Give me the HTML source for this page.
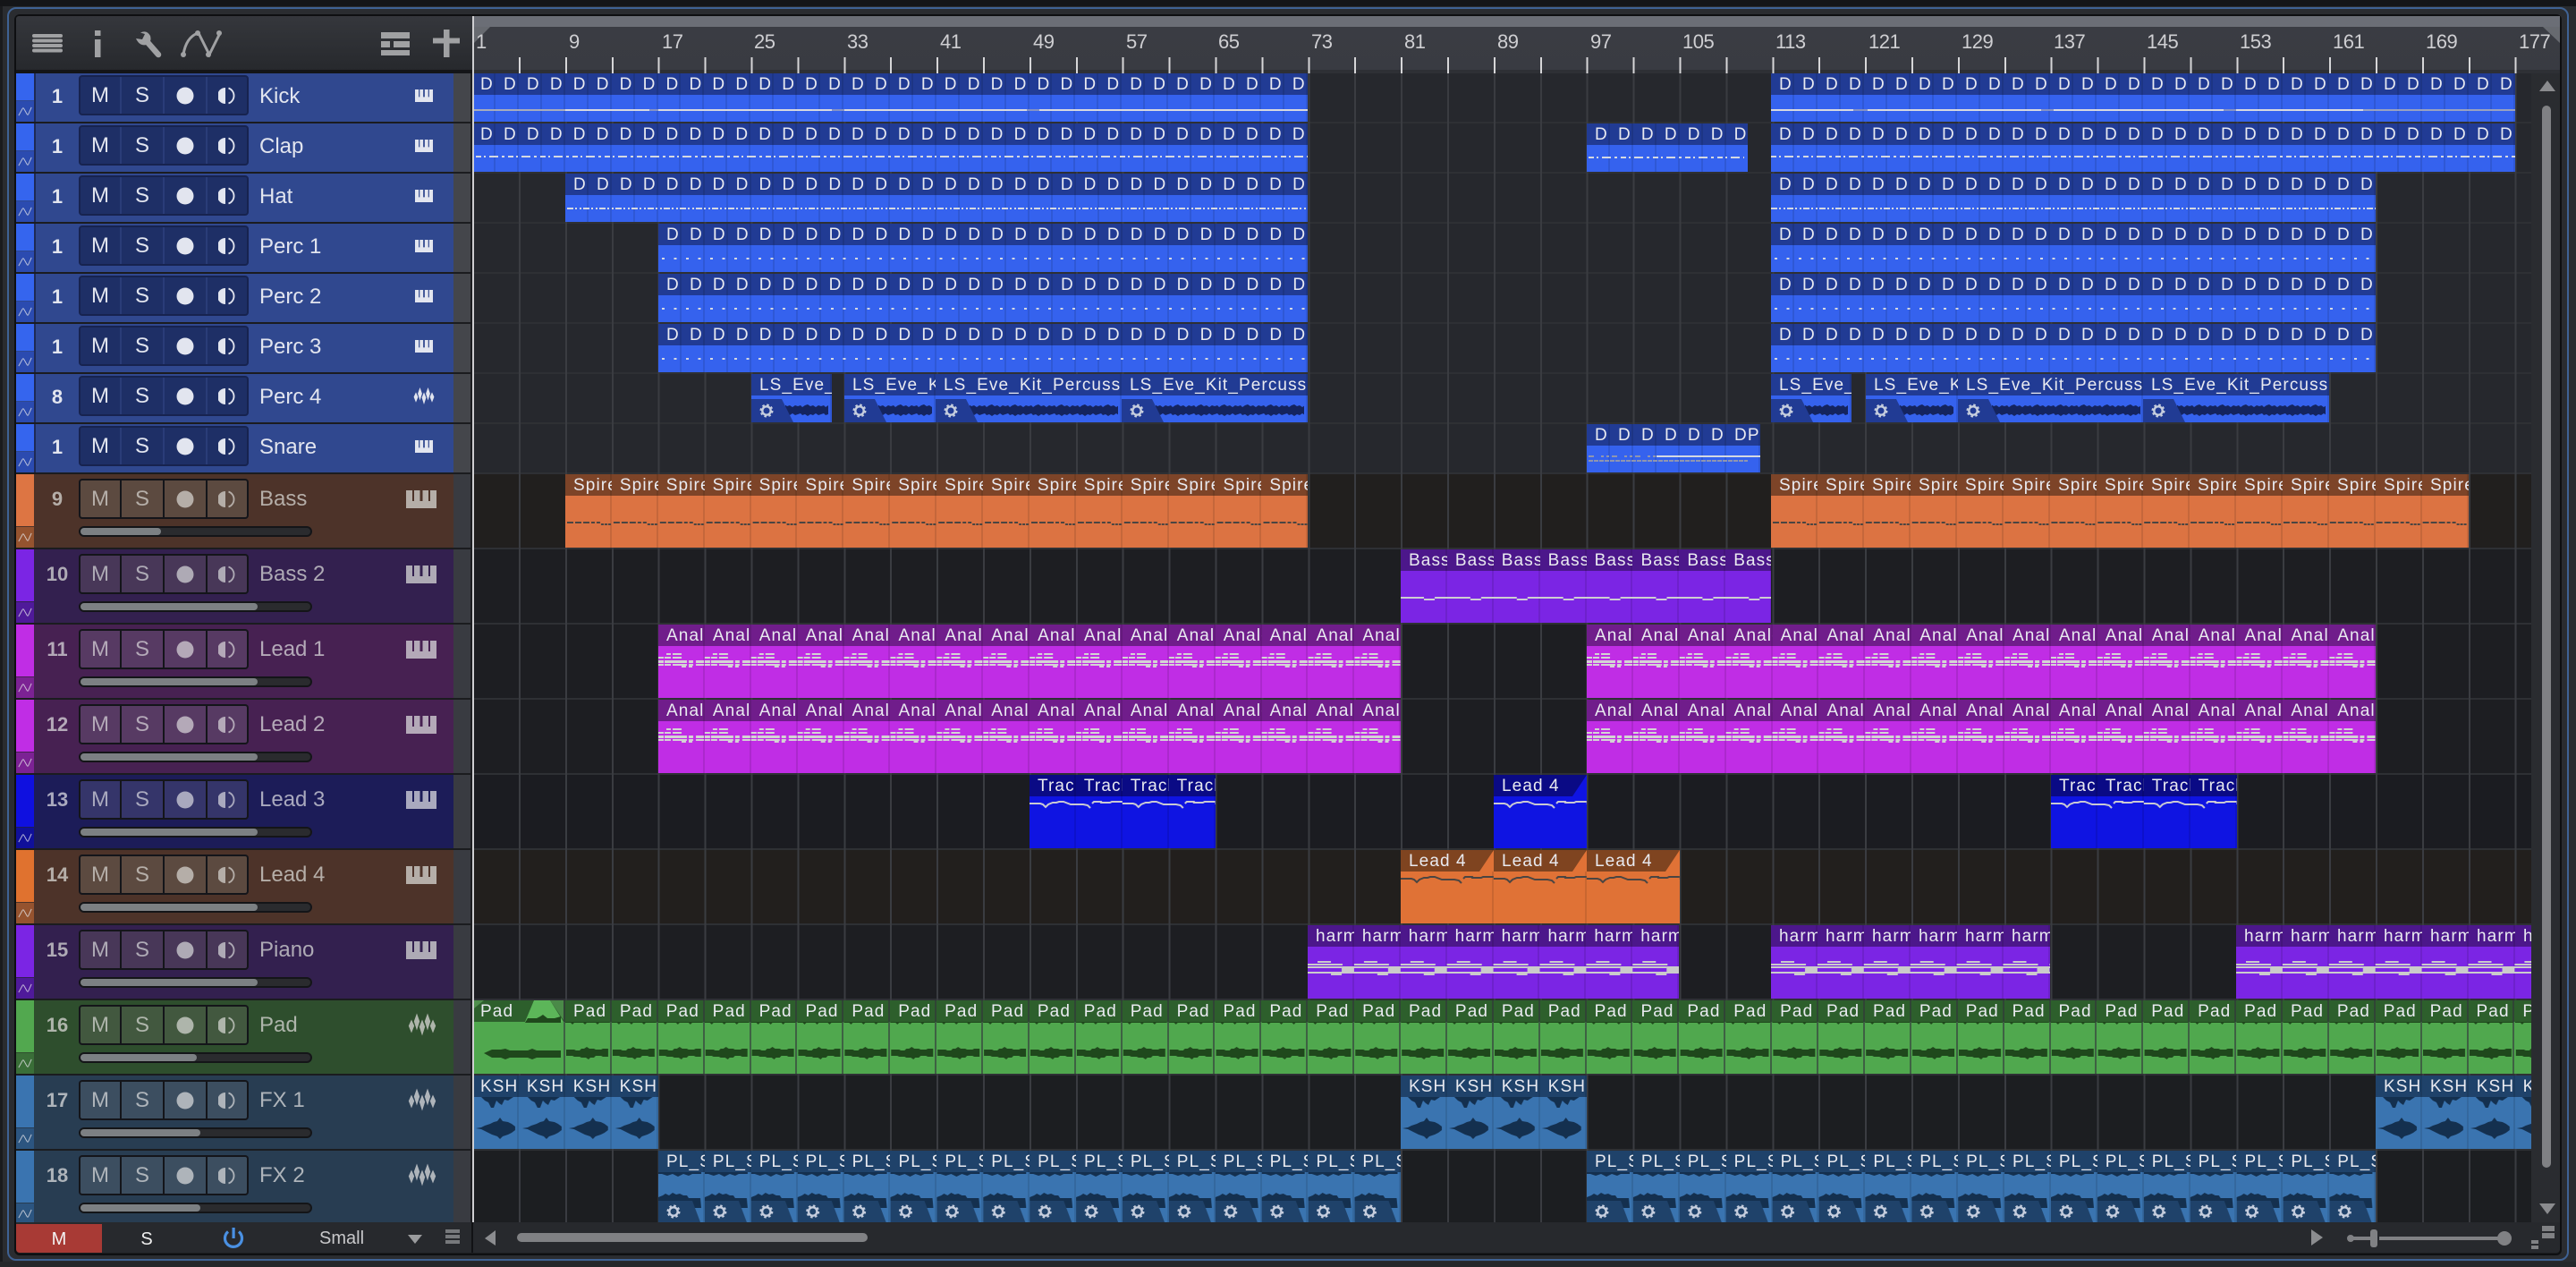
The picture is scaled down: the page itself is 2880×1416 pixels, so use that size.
<!DOCTYPE html>
<html><head><meta charset="utf-8"><title>Arrangement</title>
<style>
html,body{margin:0;padding:0;background:#2a2c30}
body{width:2880px;height:1416px;position:relative;overflow:hidden;font-family:"Liberation Sans",sans-serif}
.a{position:absolute}
.g{position:absolute;display:flex;overflow:hidden;height:82px}
.g i{flex:none;display:block;width:51.9px;height:100%;padding-left:9px;box-sizing:border-box;font:normal 19px/25px "Liberation Sans",sans-serif;letter-spacing:1.1px;overflow:hidden;white-space:nowrap;color:#e9eaf0;box-shadow:inset -2px 0 rgba(0,0,0,.1)}
.s{height:54px}.s i{width:25.95px}
.s.r i{width:26px}.r i{width:52px}
.bl{background:linear-gradient(#213b94 24px,#3562ee 24px)}
.or{background:linear-gradient(#7d4428 24px,#dc7342 24px)}
.ol{background:linear-gradient(#7f4420 24px,#e07236 24px)}
.pu{background:linear-gradient(#4c178b 24px,#7b25e4 24px)}
.mg{background:linear-gradient(#701d8b 24px,#c02de5 24px)}
.db{background:linear-gradient(#0a0a85 24px,#0f14e2 24px)}
.gn{background:linear-gradient(#2d5f2c 24px,#50a84e 24px)}
.fx{background:linear-gradient(#1f426a 24px,#3a74b0 24px)}
.gn i{box-shadow:inset -2px 0 rgba(50,50,60,.6)}
.t{position:absolute;left:18px;width:510px;height:54px;background:linear-gradient(90deg,var(--bg) 489px,#44464b 489px,#44464b 508px,#1c1d20 508px)}
.t.L{height:82px;background:linear-gradient(90deg,var(--bg) 489px,#393b41 489px,#393b41 508px,#1c1d20 508px)}
.t u{position:absolute;left:0;width:20px;display:block}
.t .st{top:0;height:30px;background:var(--st)}
.t .au{top:31px;height:23px;background:var(--au)}
.L .st{height:58px}.L .au{top:59px}
.t .gp{position:absolute;left:20px;top:0;bottom:0;width:2px;background:#1f2a55}
.L .gp{display:none}
.t .au svg{position:absolute;left:2px;top:5px;width:16px;height:13px}
.t b{position:absolute;left:22px;width:48px;text-align:center;top:14px;font:bold 22px/24px "Liberation Sans",sans-serif;color:var(--tx)}
.L b{top:16px}
.box{position:absolute;left:70px;top:2px;width:190px;height:45px;box-sizing:border-box;background:#14151a;border-radius:4px}
.t:not(.L) .box{background:#17234f}
.t:not(.L) .box p+p{box-shadow:-2px 0 #2a3c78}
.L .box{top:5px}
.box p{position:absolute;margin:0;top:2px;height:41px;background:var(--bt);color:var(--tx);font:24px/41px "Liberation Sans",sans-serif;text-align:center}
.box p:nth-child(1){left:2px;width:44px;border-radius:2px 0 0 2px}
.box p:nth-child(2){left:48px;width:46px}
.box p:nth-child(3){left:96px;width:46px}
.box p:nth-child(4){left:144px;width:44px;border-radius:0 2px 2px 0}
.box svg{position:absolute;left:50%;top:11px;margin-left:-10px;width:20px;height:20px}
.nm{position:absolute;left:272px;top:12px;font:24px/28px "Liberation Sans",sans-serif;color:var(--tx);white-space:nowrap}
.L .nm{top:14px}
.ic{position:absolute;color:var(--tx)}
.k1{left:446px;top:18px;width:20px;height:14px}
.k2{left:436px;top:18px;width:34px;height:20px}
.w2{left:438px;top:14px;width:32px;height:26px}
.w1{left:444px;top:15px;width:24px;height:19px}
.sl{position:absolute;left:70px;top:58px;width:261px;height:12px;box-sizing:border-box;border:2px solid #141518;border-radius:6px;background:#2a2b2e}
.sl s{display:block;height:8px;border-radius:4px;background:#7c8083}
.hb{background:#2e3034;height:2px;left:528px;width:2302px}
.ru{font:22px/24px "Liberation Sans",sans-serif;color:#cfcfd2;top:35px;letter-spacing:-.5px}
</style></head><body>

<svg width="0" height="0" style="position:absolute">
<defs>
<path id="pi" d="M0 0H7V12H9V0H15.5V12H18.5V0H25V12H27V0H34V20H0Z"/>
<path id="wv" d="M10 0L13.2 9L10 19L6.800 9ZM22 0L25.200 9L22 19L18.800 9ZM4 7L7.200 14L4 22L.8 14ZM16 7L19.200 15L16 25L12.800 15ZM28 7L31.200 14L28 22L24.800 14Z"/>
<g id="rec"><circle cx="10" cy="10" r="9.5" fill="currentColor"/></g>
<g id="mono"><path d="M8 1A9 9 0 0 0 8 19Z" fill="currentColor"/><path d="M11.5 1.5A9 9 0 0 1 11.5 18.500" fill="none" stroke="currentColor" stroke-width="1.800"/></g>
<path id="nn" d="M1 12L6 3Q7 1 8 3L12 10Q13 12 14 10L18 1" fill="none" stroke="#e6e6ea" stroke-opacity=".75" stroke-width="1.200"/>
<g id="gear"><circle r="4.700" fill="none" stroke="#c6cede" stroke-width="2.400"/><circle r="6.400" fill="none" stroke="#c6cede" stroke-width="2.200" stroke-dasharray="2.500 2.526"/></g>

<pattern id="pn" width="51.9" height="82" patternUnits="userSpaceOnUse"><g fill="#d4d4d4"><rect x="9" y="32" width="5" height="2"/><rect x="16" y="32" width="10" height="2"/><rect x="0" y="36" width="6" height="2"/><rect x="7" y="36" width="7" height="2"/><rect x="16" y="36" width="10" height="2"/><rect x="0" y="40" width="6" height="3"/><rect x="7" y="40" width="25" height="3"/><rect x="34" y="40" width="5" height="3"/><rect x="42" y="40" width="9" height="3"/><rect x="0" y="44" width="6" height="2"/><rect x="7" y="44" width="7" height="2"/><rect x="16" y="44" width="16" height="2"/><rect x="34" y="44" width="5" height="2"/><rect x="42" y="44" width="9" height="2"/><rect x="26" y="46" width="5" height="2"/><rect x="34" y="46" width="4" height="2"/></g></pattern>

<pattern id="ps" width="51.9" height="82" patternUnits="userSpaceOnUse"><g fill="#4a4542"><rect x="2" y="53" width="7" height="2"/><rect x="11" y="53" width="7" height="2"/><rect x="20" y="53" width="7" height="2"/><rect x="29" y="53" width="4" height="2"/><rect x="35" y="53" width="4" height="2"/><rect x="40" y="55" width="3" height="2"/><rect x="44" y="55" width="3" height="2"/><rect x="48" y="55" width="3" height="2"/></g></pattern>

<pattern id="pb" width="51.9" height="82" patternUnits="userSpaceOnUse"><g fill="#cdcdd2"><rect x="0" y="53" width="26" height="2"/><rect x="26" y="55" width="12" height="2"/><rect x="38" y="53" width="14" height="2"/></g></pattern>

<pattern id="ph" width="51.9" height="82" patternUnits="userSpaceOnUse"><g fill="#cbcbcb"><rect x="11" y="40" width="15" height="2"/><rect x="0" y="43" width="39" height="2"/><rect x="0" y="46" width="38" height="2"/><rect x="38" y="46" width="14" height="6"/><rect x="0" y="52" width="52" height="2"/><rect x="26" y="54" width="12" height="2"/></g></pattern>

<pattern id="pl" width="103.800" height="82" patternUnits="userSpaceOnUse"><path d="M0 32H12L15 33L18 36L21 33L26 31H30L33 30H38L46 33H60L65 34L68 37M70 32L72 30H80V31H90L92 30H104" fill="none" stroke="#c9c9d2" stroke-width="2"/></pattern>
<pattern id="po" width="103.800" height="82" patternUnits="userSpaceOnUse"><path d="M0 32H12L15 33L18 36L21 33L26 31H30L33 30H38L46 33H60L65 34L68 37M70 32L72 30H80V31H90L92 30H104" fill="none" stroke="#4a4542" stroke-width="2"/></pattern>

<pattern id="pp" width="51.9" height="82" patternUnits="userSpaceOnUse"><path fill="#1f481c" d="M1 55H10L12 56H16L18 54H21L24 52L27 54H32L34 55H40L42 54H48V63H42L40 62H34L32 64H28L26 66L23 64H18L16 63H10L8 62H1ZM0 24H50V25H38L36 27L34 25H24L22 27L20 25H10L8 27L6 25H0Z"/></pattern>

<pattern id="pk" width="51.9" height="82" patternUnits="userSpaceOnUse"><path fill="#14304f" d="M2 59L8 58L12 56L18 54L22 52L26 51L29 47L32 51L38 52L42 54L46 57L46 61L42 64L38 66L32 68L29 71L26 68L20 66L12 62L8 60ZM8 24H44L38 28L34 27L31 33L28 31L25 28L22 36L19 36L16 30L12 28Z"/></pattern>

<pattern id="pf" width="51.9" height="82" patternUnits="userSpaceOnUse"><path fill="#14304f" d="M0 24H48V26H38L34 28L28 26L22 29L16 26L10 28L4 26H0ZM0 52L5 50L8 48L12 50L16 47L20 49L24 48L28 50L32 50L34 53H47L48 64H38L34 56H0Z"/><path fill="#1f426a" d="M0 56H38L47 80H0Z"/><use href="#gear" x="17" y="68"/></pattern>

<pattern id="pw" width="26" height="54" patternUnits="userSpaceOnUse"><polygon fill="#14245f" points="0,36 3,35 5,37 8,35 11,34 14,36 17,35 20,37 23,35 26,36 26,45 23,46 20,44 17,46 14,45 11,47 8,45 5,46 3,44 0,45"/></pattern>
</defs>
</svg>

<!-- frame -->
<div class="a" style="left:0;top:0;width:2880px;height:7px;background:#141518"></div>
<div class="a" style="left:0;top:7px;width:3px;height:1409px;background:#1a1b1e"></div>
<div class="a" style="left:8px;top:8px;width:2864px;height:1401px;box-sizing:border-box;border:2px solid #3f6294;border-radius:10px"></div>
<div class="a" style="left:16px;top:16px;width:2848px;height:1387px;box-sizing:border-box;background:#1b1c1f;border:2px solid #0e0f11;border-radius:6px"></div>
<div class="a" style="left:18px;top:18px;width:510px;height:60px;background:linear-gradient(#35373c,#27292d);border-radius:3px 0 0 0"></div>
<div class="a" style="left:18px;top:78px;width:510px;height:4px;background:#141518"></div>

<!-- ruler -->
<div class="a" style="left:530px;top:18px;width:2332px;height:64px;background:linear-gradient(#6b6e76 12px,#3a3c43 12px,#393b42 60px,#2e3035 60px)"></div>
<svg class="a" style="left:0;top:0" width="2880" height="90"><polygon points="530,30 548,30 530,48" fill="#676a70"/><polygon points="2843,30 2862,30 2862,48" fill="#676a70"/></svg>
<div class="a" style="left:580px;top:64px;width:2234px;height:18px;background:repeating-linear-gradient(90deg,#d6d6d8 0,#d6d6d8 2px,transparent 2px,transparent 51.9px)"></div>
<span class="a ru" style="left:532px">1</span><span class="a ru" style="left:636px">9</span><span class="a ru" style="left:740px">17</span><span class="a ru" style="left:843px">25</span><span class="a ru" style="left:947px">33</span><span class="a ru" style="left:1051px">41</span><span class="a ru" style="left:1155px">49</span><span class="a ru" style="left:1259px">57</span><span class="a ru" style="left:1362px">65</span><span class="a ru" style="left:1466px">73</span><span class="a ru" style="left:1570px">81</span><span class="a ru" style="left:1674px">89</span><span class="a ru" style="left:1778px">97</span><span class="a ru" style="left:1881px">105</span><span class="a ru" style="left:1985px">113</span><span class="a ru" style="left:2089px">121</span><span class="a ru" style="left:2193px">129</span><span class="a ru" style="left:2296px">137</span><span class="a ru" style="left:2400px">145</span><span class="a ru" style="left:2504px">153</span><span class="a ru" style="left:2608px">161</span><span class="a ru" style="left:2712px">169</span><span class="a ru" style="left:2816px">177</span>

<!-- lanes -->
<div class="a" style="left:528px;top:82px;width:2302px;height:448px;background:#26282d"></div>
<div class="a" style="left:528px;top:530px;width:2302px;height:84px;background:#211f1e"></div>
<div class="a" style="left:528px;top:614px;width:2302px;height:252px;background:#1d1e22"></div>
<div class="a" style="left:528px;top:866px;width:2302px;height:84px;background:#1b1c21"></div>
<div class="a" style="left:528px;top:950px;width:2302px;height:84px;background:#221f1d"></div>
<div class="a" style="left:528px;top:1034px;width:2302px;height:84px;background:#1d1e22"></div>
<div class="a" style="left:528px;top:1118px;width:2302px;height:84px;background:#1c1e1e"></div>
<div class="a" style="left:528px;top:1202px;width:2302px;height:164px;background:#1c1e21"></div>
<div class="a" style="left:2830px;top:82px;width:32px;height:1284px;background:#2a2c30"></div>
<div class="a hb" style="top:136px"></div><div class="a hb" style="top:192px"></div><div class="a hb" style="top:248px"></div><div class="a hb" style="top:304px"></div><div class="a hb" style="top:360px"></div><div class="a hb" style="top:416px"></div><div class="a hb" style="top:472px"></div><div class="a hb" style="top:528px"></div><div class="a hb" style="top:612px"></div><div class="a hb" style="top:696px"></div><div class="a hb" style="top:780px"></div><div class="a hb" style="top:864px"></div><div class="a hb" style="top:948px"></div><div class="a hb" style="top:1032px"></div><div class="a hb" style="top:1116px"></div><div class="a hb" style="top:1200px"></div><div class="a hb" style="top:1284px"></div>
<div class="a" style="left:580px;top:82px;width:2250px;height:1284px;background:repeating-linear-gradient(90deg,#3a3c41 0,#3a3c41 2px,transparent 2px,transparent 51.9px)"></div>

<!-- clips -->
<div class="a" style="left:0;top:0;width:2830px;height:1366px;overflow:hidden">

<div class="g s bl" style="left:528px;top:82px"><i>D</i><i>D</i><i>D</i><i>D</i><i>D</i><i>D</i><i>D</i><i>D</i><i>D</i><i>D</i><i>D</i><i>D</i><i>D</i><i>D</i><i>D</i><i>D</i><i>D</i><i>D</i><i>D</i><i>D</i><i>D</i><i>D</i><i>D</i><i>D</i><i>D</i><i>D</i><i>D</i><i>D</i><i>D</i><i>D</i><i>D</i><i>D</i><i>D</i><i>D</i><i>D</i><i>D</i></div>
<div class="g s r bl" style="left:1980px;top:82px"><i>D</i><i>D</i><i>D</i><i>D</i><i>D</i><i>D</i><i>D</i><i>D</i><i>D</i><i>D</i><i>D</i><i>D</i><i>D</i><i>D</i><i>D</i><i>D</i><i>D</i><i>D</i><i>D</i><i>D</i><i>D</i><i>D</i><i>D</i><i>D</i><i>D</i><i>D</i><i>D</i><i>D</i><i>D</i><i>D</i><i>D</i><i>D</i></div>

<div class="g s bl" style="left:528px;top:138px"><i>D</i><i>D</i><i>D</i><i>D</i><i>D</i><i>D</i><i>D</i><i>D</i><i>D</i><i>D</i><i>D</i><i>D</i><i>D</i><i>D</i><i>D</i><i>D</i><i>D</i><i>D</i><i>D</i><i>D</i><i>D</i><i>D</i><i>D</i><i>D</i><i>D</i><i>D</i><i>D</i><i>D</i><i>D</i><i>D</i><i>D</i><i>D</i><i>D</i><i>D</i><i>D</i><i>D</i></div>
<div class="g s bl" style="left:1774px;top:138px;width:180px"><i>D</i><i>D</i><i>D</i><i>D</i><i>D</i><i>D</i><i>D</i></div>
<div class="g s r bl" style="left:1980px;top:138px"><i>D</i><i>D</i><i>D</i><i>D</i><i>D</i><i>D</i><i>D</i><i>D</i><i>D</i><i>D</i><i>D</i><i>D</i><i>D</i><i>D</i><i>D</i><i>D</i><i>D</i><i>D</i><i>D</i><i>D</i><i>D</i><i>D</i><i>D</i><i>D</i><i>D</i><i>D</i><i>D</i><i>D</i><i>D</i><i>D</i><i>D</i><i>D</i></div>

<div class="g s bl" style="left:632px;top:194px"><i>D</i><i>D</i><i>D</i><i>D</i><i>D</i><i>D</i><i>D</i><i>D</i><i>D</i><i>D</i><i>D</i><i>D</i><i>D</i><i>D</i><i>D</i><i>D</i><i>D</i><i>D</i><i>D</i><i>D</i><i>D</i><i>D</i><i>D</i><i>D</i><i>D</i><i>D</i><i>D</i><i>D</i><i>D</i><i>D</i><i>D</i><i>D</i></div>
<div class="g s r bl" style="left:1980px;top:194px"><i>D</i><i>D</i><i>D</i><i>D</i><i>D</i><i>D</i><i>D</i><i>D</i><i>D</i><i>D</i><i>D</i><i>D</i><i>D</i><i>D</i><i>D</i><i>D</i><i>D</i><i>D</i><i>D</i><i>D</i><i>D</i><i>D</i><i>D</i><i>D</i><i>D</i><i>D</i></div>

<div class="g s bl" style="left:736px;top:250px"><i>D</i><i>D</i><i>D</i><i>D</i><i>D</i><i>D</i><i>D</i><i>D</i><i>D</i><i>D</i><i>D</i><i>D</i><i>D</i><i>D</i><i>D</i><i>D</i><i>D</i><i>D</i><i>D</i><i>D</i><i>D</i><i>D</i><i>D</i><i>D</i><i>D</i><i>D</i><i>D</i><i>D</i></div>
<div class="g s r bl" style="left:1980px;top:250px"><i>D</i><i>D</i><i>D</i><i>D</i><i>D</i><i>D</i><i>D</i><i>D</i><i>D</i><i>D</i><i>D</i><i>D</i><i>D</i><i>D</i><i>D</i><i>D</i><i>D</i><i>D</i><i>D</i><i>D</i><i>D</i><i>D</i><i>D</i><i>D</i><i>D</i><i>D</i></div>

<div class="g s bl" style="left:736px;top:306px"><i>D</i><i>D</i><i>D</i><i>D</i><i>D</i><i>D</i><i>D</i><i>D</i><i>D</i><i>D</i><i>D</i><i>D</i><i>D</i><i>D</i><i>D</i><i>D</i><i>D</i><i>D</i><i>D</i><i>D</i><i>D</i><i>D</i><i>D</i><i>D</i><i>D</i><i>D</i><i>D</i><i>D</i></div>
<div class="g s r bl" style="left:1980px;top:306px"><i>D</i><i>D</i><i>D</i><i>D</i><i>D</i><i>D</i><i>D</i><i>D</i><i>D</i><i>D</i><i>D</i><i>D</i><i>D</i><i>D</i><i>D</i><i>D</i><i>D</i><i>D</i><i>D</i><i>D</i><i>D</i><i>D</i><i>D</i><i>D</i><i>D</i><i>D</i></div>

<div class="g s bl" style="left:736px;top:362px"><i>D</i><i>D</i><i>D</i><i>D</i><i>D</i><i>D</i><i>D</i><i>D</i><i>D</i><i>D</i><i>D</i><i>D</i><i>D</i><i>D</i><i>D</i><i>D</i><i>D</i><i>D</i><i>D</i><i>D</i><i>D</i><i>D</i><i>D</i><i>D</i><i>D</i><i>D</i><i>D</i><i>D</i></div>
<div class="g s r bl" style="left:1980px;top:362px"><i>D</i><i>D</i><i>D</i><i>D</i><i>D</i><i>D</i><i>D</i><i>D</i><i>D</i><i>D</i><i>D</i><i>D</i><i>D</i><i>D</i><i>D</i><i>D</i><i>D</i><i>D</i><i>D</i><i>D</i><i>D</i><i>D</i><i>D</i><i>D</i><i>D</i><i>D</i></div>

<div class="g s bl" style="left:840px;top:418px;width:90px"><i style="width:90px">LS_Eve_Kit_Percussion</i></div>
<div class="g s bl" style="left:944px;top:418px;width:102px"><i style="width:102px">LS_Eve_Kit_Percussion</i></div>
<div class="g s bl" style="left:1046px;top:418px;width:208px"><i style="width:208px">LS_Eve_Kit_Percussion</i></div>
<div class="g s bl" style="left:1254px;top:418px;width:208px"><i style="width:208px">LS_Eve_Kit_Percussion</i></div>
<div class="g s bl" style="left:1980px;top:418px;width:90px"><i style="width:90px">LS_Eve_Kit_Percussion</i></div>
<div class="g s bl" style="left:2086px;top:418px;width:103px"><i style="width:103px">LS_Eve_Kit_Percussion</i></div>
<div class="g s bl" style="left:2189px;top:418px;width:207px"><i style="width:207px">LS_Eve_Kit_Percussion</i></div>
<div class="g s bl" style="left:2396px;top:418px;width:208px"><i style="width:208px">LS_Eve_Kit_Percussion</i></div>

<div class="g s r bl" style="left:1774px;top:474px;width:194px"><i>D</i><i>D</i><i>D</i><i>D</i><i>D</i><i>D</i><i style="width:38px">DP</i></div>

<div class="g or" style="left:632px;top:530px"><i>Spire</i><i>Spire</i><i>Spire</i><i>Spire</i><i>Spire</i><i>Spire</i><i>Spire</i><i>Spire</i><i>Spire</i><i>Spire</i><i>Spire</i><i>Spire</i><i>Spire</i><i>Spire</i><i>Spire</i><i>Spire</i></div>
<div class="g r or" style="left:1980px;top:530px"><i>Spire</i><i>Spire</i><i>Spire</i><i>Spire</i><i>Spire</i><i>Spire</i><i>Spire</i><i>Spire</i><i>Spire</i><i>Spire</i><i>Spire</i><i>Spire</i><i>Spire</i><i>Spire</i><i>Spire</i></div>

<div class="g pu" style="left:1566px;top:614px;width:414px"><i>Bass</i><i>Bass</i><i>Bass</i><i>Bass</i><i>Bass</i><i>Bass</i><i>Bass</i><i>Bass</i></div>

<div class="g mg" style="left:736px;top:698px"><i>Analog</i><i>Analog</i><i>Analog</i><i>Analog</i><i>Analog</i><i>Analog</i><i>Analog</i><i>Analog</i><i>Analog</i><i>Analog</i><i>Analog</i><i>Analog</i><i>Analog</i><i>Analog</i><i>Analog</i><i>Analog</i></div>
<div class="g mg" style="left:1774px;top:698px"><i>Analog</i><i>Analog</i><i>Analog</i><i>Analog</i><i>Analog</i><i>Analog</i><i>Analog</i><i>Analog</i><i>Analog</i><i>Analog</i><i>Analog</i><i>Analog</i><i>Analog</i><i>Analog</i><i>Analog</i><i>Analog</i><i>Analog</i></div>

<div class="g mg" style="left:736px;top:782px"><i>Analog</i><i>Analog</i><i>Analog</i><i>Analog</i><i>Analog</i><i>Analog</i><i>Analog</i><i>Analog</i><i>Analog</i><i>Analog</i><i>Analog</i><i>Analog</i><i>Analog</i><i>Analog</i><i>Analog</i><i>Analog</i></div>
<div class="g mg" style="left:1774px;top:782px"><i>Analog</i><i>Analog</i><i>Analog</i><i>Analog</i><i>Analog</i><i>Analog</i><i>Analog</i><i>Analog</i><i>Analog</i><i>Analog</i><i>Analog</i><i>Analog</i><i>Analog</i><i>Analog</i><i>Analog</i><i>Analog</i><i>Analog</i></div>

<div class="g db" style="left:1151px;top:866px"><i>Track</i><i>Track</i><i>Track</i><i>Track</i></div>
<div class="g db" style="left:1670px;top:866px;width:104px"><i style="width:104px;box-shadow:none">Lead 4</i></div>
<div class="g db" style="left:2293px;top:866px"><i>Track</i><i>Track</i><i>Track</i><i>Track</i></div>

<div class="g ol" style="left:1566px;top:950px;width:312px"><i style="width:104px">Lead 4</i><i style="width:104px">Lead 4</i><i style="width:104px;box-shadow:none">Lead 4</i></div>

<div class="g pu" style="left:1462px;top:1034px"><i>harmony</i><i>harmony</i><i>harmony</i><i>harmony</i><i>harmony</i><i>harmony</i><i>harmony</i><i>harmony</i></div>
<div class="g r pu" style="left:1980px;top:1034px"><i>harmony</i><i>harmony</i><i>harmony</i><i>harmony</i><i>harmony</i><i>harmony</i></div>
<div class="g r pu" style="left:2500px;top:1034px"><i>harmony</i><i>harmony</i><i>harmony</i><i>harmony</i><i>harmony</i><i>harmony</i><i>harmony</i></div>

<div class="g gn" style="left:528px;top:1118px;width:104px"><i style="width:104px">Pad</i></div>
<div class="g gn" style="left:632px;top:1118px"><i>Pad</i><i>Pad</i><i>Pad</i><i>Pad</i><i>Pad</i><i>Pad</i><i>Pad</i><i>Pad</i><i>Pad</i><i>Pad</i><i>Pad</i><i>Pad</i><i>Pad</i><i>Pad</i><i>Pad</i><i>Pad</i><i>Pad</i><i>Pad</i><i>Pad</i><i>Pad</i><i>Pad</i><i>Pad</i><i>Pad</i><i>Pad</i><i>Pad</i><i>Pad</i><i>Pad</i><i>Pad</i><i>Pad</i><i>Pad</i><i>Pad</i><i>Pad</i><i>Pad</i><i>Pad</i><i>Pad</i><i>Pad</i><i>Pad</i><i>Pad</i><i>Pad</i><i>Pad</i><i>Pad</i><i>Pad</i><i>Pad</i></div>

<div class="g fx" style="left:528px;top:1202px;width:208px"><i>KSH</i><i>KSH</i><i>KSH</i><i>KSH</i></div>
<div class="g fx" style="left:1566px;top:1202px;width:208px"><i>KSH</i><i>KSH</i><i>KSH</i><i>KSH</i></div>
<div class="g fx" style="left:2656px;top:1202px"><i>KSH</i><i>KSH</i><i>KSH</i><i>KSH</i></div>

<div class="g fx" style="left:736px;top:1286px;height:80px"><i>PL_Synth</i><i>PL_Synth</i><i>PL_Synth</i><i>PL_Synth</i><i>PL_Synth</i><i>PL_Synth</i><i>PL_Synth</i><i>PL_Synth</i><i>PL_Synth</i><i>PL_Synth</i><i>PL_Synth</i><i>PL_Synth</i><i>PL_Synth</i><i>PL_Synth</i><i>PL_Synth</i><i>PL_Synth</i></div>
<div class="g fx" style="left:1774px;top:1286px;height:80px"><i>PL_Synth</i><i>PL_Synth</i><i>PL_Synth</i><i>PL_Synth</i><i>PL_Synth</i><i>PL_Synth</i><i>PL_Synth</i><i>PL_Synth</i><i>PL_Synth</i><i>PL_Synth</i><i>PL_Synth</i><i>PL_Synth</i><i>PL_Synth</i><i>PL_Synth</i><i>PL_Synth</i><i>PL_Synth</i><i>PL_Synth</i></div>

<!-- clip content overlay -->
<svg class="a" style="left:0;top:0" width="2830" height="1366" shape-rendering="crispEdges">
<g fill="#d8dae0">
<rect x="530" y="122" width="102" height="2" fill="#a8acbc"/><rect x="632" y="122" width="94" height="2"/><rect x="726" y="122" width="10" height="2" fill="#8592c4"/><rect x="736" y="122" width="194" height="2"/><rect x="930" y="122" width="14" height="2" fill="#8592c4"/><rect x="944" y="122" width="204" height="2"/><rect x="1148" y="122" width="14" height="2" fill="#8592c4"/><rect x="1162" y="122" width="300" height="2"/>
<rect x="1980" y="122" width="92" height="2"/><rect x="2072" y="122" width="16" height="2" fill="#8592c4"/><rect x="2088" y="122" width="194" height="2"/><rect x="2282" y="122" width="14" height="2" fill="#8592c4"/><rect x="2296" y="122" width="190" height="2"/><rect x="2486" y="122" width="14" height="2" fill="#8592c4"/><rect x="2500" y="122" width="142" height="2"/><rect x="2642" y="122" width="170" height="2" fill="#9aa2c0"/>
</g>
<g fill="none" stroke="#d4d8e2" stroke-width="2">
<path d="M532 175H1462M1980 175H2812M1776 176H1950" stroke-dasharray="6 3 2 4 10 4 3 4"/>
<path d="M634 233H1462M1980 233H2656" stroke-dasharray="7 2 2 3 2 2"/>
<path d="M740 289H1462M1984 289H2650M740 345H1462M1984 345H2650M740 401H1462M1984 401H2650" stroke-dasharray="3 10.500"/>
</g>
<!-- snare -->
<path d="M1852 510H1968" stroke="#d4d8e2" stroke-width="2"/>
<path d="M1776 515H1954" stroke="#8e95b0" stroke-width="2" stroke-dasharray="5 1"/>
<path d="M1776 510H1852" stroke="#8e95b0" stroke-width="2" stroke-dasharray="6 8 3 3 3 3"/>
</svg>
<svg class="a" style="left:0;top:0" width="2830" height="1366">
<!-- perc 4 waves -->
<g transform="translate(840,418)"><rect x="38" y="30" width="48" height="24" fill="url(#pw)"/><polygon points="0,28 34,28 47,54 0,54" fill="#213b94"/><use href="#gear" x="17" y="41"/></g>
<g transform="translate(944,418)"><rect x="38" y="30" width="60" height="24" fill="url(#pw)"/><polygon points="0,28 34,28 47,54 0,54" fill="#213b94"/><use href="#gear" x="17" y="41"/></g>
<g transform="translate(1046,418)"><rect x="38" y="30" width="166" height="24" fill="url(#pw)"/><polygon points="0,28 34,28 47,54 0,54" fill="#213b94"/><use href="#gear" x="17" y="41"/></g>
<g transform="translate(1254,418)"><rect x="38" y="30" width="166" height="24" fill="url(#pw)"/><polygon points="0,28 34,28 47,54 0,54" fill="#213b94"/><use href="#gear" x="17" y="41"/></g>
<g transform="translate(1980,418)"><rect x="38" y="30" width="48" height="24" fill="url(#pw)"/><polygon points="0,28 34,28 47,54 0,54" fill="#213b94"/><use href="#gear" x="17" y="41"/></g>
<g transform="translate(2086,418)"><rect x="38" y="30" width="60" height="24" fill="url(#pw)"/><polygon points="0,28 34,28 47,54 0,54" fill="#213b94"/><use href="#gear" x="17" y="41"/></g>
<g transform="translate(2189,418)"><rect x="38" y="30" width="166" height="24" fill="url(#pw)"/><polygon points="0,28 34,28 47,54 0,54" fill="#213b94"/><use href="#gear" x="17" y="41"/></g>
<g transform="translate(2396,418)"><rect x="38" y="30" width="166" height="24" fill="url(#pw)"/><polygon points="0,28 34,28 47,54 0,54" fill="#213b94"/><use href="#gear" x="17" y="41"/></g>

<g transform="translate(632,530)"><rect width="830" height="82" fill="url(#ps)"/></g>
<g transform="translate(1980,530)"><rect width="780" height="82" fill="url(#ps)"/></g>
<g transform="translate(1566,614)"><rect width="414" height="82" fill="url(#pb)"/></g>
<g transform="translate(736,698)"><rect width="830" height="82" fill="url(#pn)"/></g>
<g transform="translate(1774,698)"><rect width="882" height="82" fill="url(#pn)"/></g>
<g transform="translate(736,782)"><rect width="830" height="82" fill="url(#pn)"/></g>
<g transform="translate(1774,782)"><rect width="882" height="82" fill="url(#pn)"/></g>
<g transform="translate(1151,866)"><rect width="208" height="82" fill="url(#pl)"/></g>
<g transform="translate(1670,866)"><rect width="104" height="82" fill="url(#pl)"/></g>
<g transform="translate(2293,866)"><rect width="208" height="82" fill="url(#pl)"/></g>
<g transform="translate(1566,950)"><rect width="104" height="82" fill="url(#po)"/></g>
<g transform="translate(1670,950)"><rect width="104" height="82" fill="url(#po)"/></g>
<g transform="translate(1774,950)"><rect width="104" height="82" fill="url(#po)"/></g>
<polygon points="1774,866 1774,890 1758,890" fill="#0f14e2"/>
<polygon points="1670,950 1670,974 1654,974" fill="#e07236"/><polygon points="1774,950 1774,974 1758,974" fill="#e07236"/><polygon points="1878,950 1878,974 1862,974" fill="#e07236"/>
<g transform="translate(1462,1034)"><rect width="415" height="82" fill="url(#ph)"/></g>
<g transform="translate(1980,1034)"><rect width="312" height="82" fill="url(#ph)"/></g>
<g transform="translate(2500,1034)"><rect width="330" height="82" fill="url(#ph)"/></g>
<!-- pad -->
<polygon points="530,1118 541,1118 530,1127" fill="#4f8f4c"/>
<polygon points="597,1118 615,1118 630,1142 587,1142" fill="#5cb659"/>
<polygon points="615,1118 630,1118 630,1140" fill="#4a8a48"/>
<path fill="#1f481c" d="M587 1143L590 1138H600L604 1136L607 1134L612 1138H620L627 1136V1143Z"/>
<path fill="#1f481c" d="M541 1177L550 1173H560L565 1172L570 1174H590L595 1172L600 1174H627V1182H600L595 1184L590 1182H570L565 1184L560 1182H550Z"/>
<g transform="translate(632,1118)"><rect width="2198" height="82" fill="url(#pp)"/></g>
<g transform="translate(530,1202)"><rect width="206" height="82" fill="url(#pk)"/></g>
<g transform="translate(1566,1202)"><rect width="208" height="82" fill="url(#pk)"/></g>
<g transform="translate(2656,1202)"><rect width="174" height="82" fill="url(#pk)"/></g>
<g transform="translate(736,1286)"><rect width="830" height="80" fill="url(#pf)"/></g>
<g transform="translate(1774,1286)"><rect width="882" height="80" fill="url(#pf)"/></g>
</svg>
</div>

<!-- vertical line -->
<div class="a" style="left:528px;top:18px;width:2px;height:1348px;background:#cfcfd2"></div>

<!-- header icons -->
<svg class="a" style="left:18px;top:18px" width="510" height="60" fill="#a0a1a3">
<rect x="18" y="20" width="34" height="4" rx="2"/><rect x="18" y="25.500" width="34" height="4" rx="2"/><rect x="18" y="31" width="34" height="4" rx="2"/><rect x="18" y="36.500" width="34" height="4" rx="2"/>
<rect x="88" y="16" width="6.500" height="6"/><rect x="88" y="26" width="6.500" height="20"/>
<path d="M145 27L159 43" stroke="#a0a1a3" stroke-width="6.500" stroke-linecap="round" fill="none"/>
<path d="M134 25L141 26L144 20L139 18.500Q146 15 150 22Q152 29 146 32Q138 34 134 25Z"/>
<g fill="none" stroke="#a0a1a3" stroke-width="3"><path d="M187 43Q190 24 203 19"/><path d="M204 19L216 43L228 19"/></g>
<circle cx="187" cy="43" r="3"/><circle cx="203" cy="19" r="3"/><circle cx="215" cy="43" r="3"/><circle cx="227" cy="19" r="3"/>
<rect x="408" y="18" width="32" height="7"/><rect x="408" y="28" width="10" height="7"/><rect x="422" y="28" width="18" height="7"/><rect x="408" y="38" width="32" height="6"/>
<rect x="466" y="24.500" width="30" height="6"/><rect x="478" y="15" width="6.500" height="31"/>
</svg>

<!-- tracks -->
<div class="t" style="top:82px;--bg:#30488f;--st:#3565ee;--au:#2b4bb0;--bt:#1e2f66;--tx:#e2e5ef"><u class="st"></u><u class="au"><svg viewBox="0 0 19 13"><use href="#nn"/></svg></u><u class="gp"></u><b>1</b><div class="box"><p>M</p><p>S</p><p><svg viewBox="0 0 20 20"><use href="#rec"/></svg></p><p><svg viewBox="0 0 20 20"><use href="#mono"/></svg></p></div><span class="nm">Kick</span><svg class="ic k1" viewBox="0 0 34 20" preserveAspectRatio="none" fill="currentColor"><use href="#pi"/></svg></div>
<div class="t" style="top:138px;--bg:#30488f;--st:#3565ee;--au:#2b4bb0;--bt:#1e2f66;--tx:#e2e5ef"><u class="st"></u><u class="au"><svg viewBox="0 0 19 13"><use href="#nn"/></svg></u><u class="gp"></u><b>1</b><div class="box"><p>M</p><p>S</p><p><svg viewBox="0 0 20 20"><use href="#rec"/></svg></p><p><svg viewBox="0 0 20 20"><use href="#mono"/></svg></p></div><span class="nm">Clap</span><svg class="ic k1" viewBox="0 0 34 20" preserveAspectRatio="none" fill="currentColor"><use href="#pi"/></svg></div>
<div class="t" style="top:194px;--bg:#30488f;--st:#3565ee;--au:#2b4bb0;--bt:#1e2f66;--tx:#e2e5ef"><u class="st"></u><u class="au"><svg viewBox="0 0 19 13"><use href="#nn"/></svg></u><u class="gp"></u><b>1</b><div class="box"><p>M</p><p>S</p><p><svg viewBox="0 0 20 20"><use href="#rec"/></svg></p><p><svg viewBox="0 0 20 20"><use href="#mono"/></svg></p></div><span class="nm">Hat</span><svg class="ic k1" viewBox="0 0 34 20" preserveAspectRatio="none" fill="currentColor"><use href="#pi"/></svg></div>
<div class="t" style="top:250px;--bg:#30488f;--st:#3565ee;--au:#2b4bb0;--bt:#1e2f66;--tx:#e2e5ef"><u class="st"></u><u class="au"><svg viewBox="0 0 19 13"><use href="#nn"/></svg></u><u class="gp"></u><b>1</b><div class="box"><p>M</p><p>S</p><p><svg viewBox="0 0 20 20"><use href="#rec"/></svg></p><p><svg viewBox="0 0 20 20"><use href="#mono"/></svg></p></div><span class="nm">Perc 1</span><svg class="ic k1" viewBox="0 0 34 20" preserveAspectRatio="none" fill="currentColor"><use href="#pi"/></svg></div>
<div class="t" style="top:306px;--bg:#30488f;--st:#3565ee;--au:#2b4bb0;--bt:#1e2f66;--tx:#e2e5ef"><u class="st"></u><u class="au"><svg viewBox="0 0 19 13"><use href="#nn"/></svg></u><u class="gp"></u><b>1</b><div class="box"><p>M</p><p>S</p><p><svg viewBox="0 0 20 20"><use href="#rec"/></svg></p><p><svg viewBox="0 0 20 20"><use href="#mono"/></svg></p></div><span class="nm">Perc 2</span><svg class="ic k1" viewBox="0 0 34 20" preserveAspectRatio="none" fill="currentColor"><use href="#pi"/></svg></div>
<div class="t" style="top:362px;--bg:#30488f;--st:#3565ee;--au:#2b4bb0;--bt:#1e2f66;--tx:#e2e5ef"><u class="st"></u><u class="au"><svg viewBox="0 0 19 13"><use href="#nn"/></svg></u><u class="gp"></u><b>1</b><div class="box"><p>M</p><p>S</p><p><svg viewBox="0 0 20 20"><use href="#rec"/></svg></p><p><svg viewBox="0 0 20 20"><use href="#mono"/></svg></p></div><span class="nm">Perc 3</span><svg class="ic k1" viewBox="0 0 34 20" preserveAspectRatio="none" fill="currentColor"><use href="#pi"/></svg></div>
<div class="t" style="top:418px;--bg:#30488f;--st:#3565ee;--au:#2b4bb0;--bt:#1e2f66;--tx:#e2e5ef"><u class="st"></u><u class="au"><svg viewBox="0 0 19 13"><use href="#nn"/></svg></u><u class="gp"></u><b>8</b><div class="box"><p>M</p><p>S</p><p><svg viewBox="0 0 20 20"><use href="#rec"/></svg></p><p><svg viewBox="0 0 20 20"><use href="#mono"/></svg></p></div><span class="nm">Perc 4</span><svg class="ic w1" viewBox="0 0 32 25" preserveAspectRatio="none" fill="currentColor"><use href="#wv"/></svg></div>
<div class="t" style="top:474px;--bg:#30488f;--st:#3565ee;--au:#2b4bb0;--bt:#1e2f66;--tx:#e2e5ef"><u class="st"></u><u class="au"><svg viewBox="0 0 19 13"><use href="#nn"/></svg></u><u class="gp"></u><b>1</b><div class="box"><p>M</p><p>S</p><p><svg viewBox="0 0 20 20"><use href="#rec"/></svg></p><p><svg viewBox="0 0 20 20"><use href="#mono"/></svg></p></div><span class="nm">Snare</span><svg class="ic k1" viewBox="0 0 34 20" preserveAspectRatio="none" fill="currentColor"><use href="#pi"/></svg></div>

<div class="t L" style="top:530px;--bg:#4d3329;--st:#dd7543;--au:#95532f;--bt:#5c4a40;--tx:#b5aea8"><u class="st"></u><u class="au"><svg viewBox="0 0 19 13"><use href="#nn"/></svg></u><b>9</b><div class="box"><p>M</p><p>S</p><p><svg viewBox="0 0 20 20"><use href="#rec"/></svg></p><p><svg viewBox="0 0 20 20"><use href="#mono"/></svg></p></div><span class="nm">Bass</span><svg class="ic k2" viewBox="0 0 34 20" fill="currentColor"><use href="#pi"/></svg><div class="sl"><s style="width:90px"></s></div></div>
<div class="t L" style="top:614px;--bg:#33204f;--st:#7b25e4;--au:#4f1a9a;--bt:#483758;--tx:#aeaab5"><u class="st"></u><u class="au"><svg viewBox="0 0 19 13"><use href="#nn"/></svg></u><b>10</b><div class="box"><p>M</p><p>S</p><p><svg viewBox="0 0 20 20"><use href="#rec"/></svg></p><p><svg viewBox="0 0 20 20"><use href="#mono"/></svg></p></div><span class="nm">Bass 2</span><svg class="ic k2" viewBox="0 0 34 20" fill="currentColor"><use href="#pi"/></svg><div class="sl"><s style="width:198px"></s></div></div>
<div class="t L" style="top:698px;--bg:#472152;--st:#c02de5;--au:#7c2294;--bt:#573a63;--tx:#b4a9b8"><u class="st"></u><u class="au"><svg viewBox="0 0 19 13"><use href="#nn"/></svg></u><b>11</b><div class="box"><p>M</p><p>S</p><p><svg viewBox="0 0 20 20"><use href="#rec"/></svg></p><p><svg viewBox="0 0 20 20"><use href="#mono"/></svg></p></div><span class="nm">Lead 1</span><svg class="ic k2" viewBox="0 0 34 20" fill="currentColor"><use href="#pi"/></svg><div class="sl"><s style="width:198px"></s></div></div>
<div class="t L" style="top:782px;--bg:#472152;--st:#c02de5;--au:#7c2294;--bt:#573a63;--tx:#b4a9b8"><u class="st"></u><u class="au"><svg viewBox="0 0 19 13"><use href="#nn"/></svg></u><b>12</b><div class="box"><p>M</p><p>S</p><p><svg viewBox="0 0 20 20"><use href="#rec"/></svg></p><p><svg viewBox="0 0 20 20"><use href="#mono"/></svg></p></div><span class="nm">Lead 2</span><svg class="ic k2" viewBox="0 0 34 20" fill="currentColor"><use href="#pi"/></svg><div class="sl"><s style="width:198px"></s></div></div>
<div class="t L" style="top:866px;--bg:#1c1c58;--st:#0f10e0;--au:#10109a;--bt:#35356a;--tx:#a9a9be"><u class="st"></u><u class="au"><svg viewBox="0 0 19 13"><use href="#nn"/></svg></u><b>13</b><div class="box"><p>M</p><p>S</p><p><svg viewBox="0 0 20 20"><use href="#rec"/></svg></p><p><svg viewBox="0 0 20 20"><use href="#mono"/></svg></p></div><span class="nm">Lead 3</span><svg class="ic k2" viewBox="0 0 34 20" fill="currentColor"><use href="#pi"/></svg><div class="sl"><s style="width:198px"></s></div></div>
<div class="t L" style="top:950px;--bg:#4d3329;--st:#e0722f;--au:#95532f;--bt:#5c4a40;--tx:#b5aea8"><u class="st"></u><u class="au"><svg viewBox="0 0 19 13"><use href="#nn"/></svg></u><b>14</b><div class="box"><p>M</p><p>S</p><p><svg viewBox="0 0 20 20"><use href="#rec"/></svg></p><p><svg viewBox="0 0 20 20"><use href="#mono"/></svg></p></div><span class="nm">Lead 4</span><svg class="ic k2" viewBox="0 0 34 20" fill="currentColor"><use href="#pi"/></svg><div class="sl"><s style="width:198px"></s></div></div>
<div class="t L" style="top:1034px;--bg:#33204f;--st:#7b25e4;--au:#4f1a9a;--bt:#483758;--tx:#aeaab5"><u class="st"></u><u class="au"><svg viewBox="0 0 19 13"><use href="#nn"/></svg></u><b>15</b><div class="box"><p>M</p><p>S</p><p><svg viewBox="0 0 20 20"><use href="#rec"/></svg></p><p><svg viewBox="0 0 20 20"><use href="#mono"/></svg></p></div><span class="nm">Piano</span><svg class="ic k2" viewBox="0 0 34 20" fill="currentColor"><use href="#pi"/></svg><div class="sl"><s style="width:198px"></s></div></div>
<div class="t L" style="top:1118px;--bg:#2e4e2d;--st:#52a84f;--au:#3a6e38;--bt:#42583f;--tx:#aeb5ab"><u class="st"></u><u class="au"><svg viewBox="0 0 19 13"><use href="#nn"/></svg></u><b>16</b><div class="box"><p>M</p><p>S</p><p><svg viewBox="0 0 20 20"><use href="#rec"/></svg></p><p><svg viewBox="0 0 20 20"><use href="#mono"/></svg></p></div><span class="nm">Pad</span><svg class="ic w2" viewBox="0 0 32 25" fill="currentColor"><use href="#wv"/></svg><div class="sl"><s style="width:130px"></s></div></div>
<div class="t L" style="top:1202px;--bg:#283d52;--st:#3a74b0;--au:#2c5580;--bt:#3c4e60;--tx:#aeb4ba"><u class="st"></u><u class="au"><svg viewBox="0 0 19 13"><use href="#nn"/></svg></u><b>17</b><div class="box"><p>M</p><p>S</p><p><svg viewBox="0 0 20 20"><use href="#rec"/></svg></p><p><svg viewBox="0 0 20 20"><use href="#mono"/></svg></p></div><span class="nm">FX 1</span><svg class="ic w2" viewBox="0 0 32 25" fill="currentColor"><use href="#wv"/></svg><div class="sl"><s style="width:134px"></s></div></div>
<div class="t L" style="top:1286px;height:80px;--bg:#283d52;--st:#3a74b0;--au:#2c5580;--bt:#3c4e60;--tx:#aeb4ba"><u class="st"></u><u class="au" style="height:21px"><svg viewBox="0 0 19 13"><use href="#nn"/></svg></u><b>18</b><div class="box"><p>M</p><p>S</p><p><svg viewBox="0 0 20 20"><use href="#rec"/></svg></p><p><svg viewBox="0 0 20 20"><use href="#mono"/></svg></p></div><span class="nm">FX 2</span><svg class="ic w2" viewBox="0 0 32 25" fill="currentColor"><use href="#wv"/></svg><div class="sl"><s style="width:134px"></s></div></div>

<!-- scrollbar column -->
<svg class="a" style="left:2830px;top:82px" width="32" height="1284"><polygon points="18,8 27,20 9,20" fill="#8a8b8e"/><rect x="12" y="36" width="10" height="1187" rx="5" fill="#808184"/><polygon points="9,1263 27,1263 18,1275" fill="#8a8b8e"/></svg>

<!-- bottom bar -->
<div class="a" style="left:18px;top:1366px;width:2844px;height:34px;background:#27292d;border-radius:0 0 4px 4px"></div>
<div class="a" style="left:527px;top:1366px;width:2px;height:34px;background:#111215"></div>
<div class="a" style="left:18px;top:1368px;width:96px;height:32px;background:#a83a35;border-radius:0 0 0 4px;color:#f3f3f3;font:20px/34px 'Liberation Sans',sans-serif;text-align:center">M</div>
<div class="a" style="left:144px;top:1368px;width:40px;color:#efefef;font:20px/34px 'Liberation Sans',sans-serif;text-align:center">S</div>
<span class="a" style="left:357px;top:1369px;color:#c8c8ca;font:20px/30px 'Liberation Sans',sans-serif">Small</span>
<svg class="a" style="left:0;top:1366px" width="2880" height="36">
<path d="M255 10.500A9.500 9.500 0 1 0 267 10.500" fill="none" stroke="#4a90e2" stroke-width="3.200"/><rect x="259.500" y="6" width="3.200" height="12" fill="#4a90e2"/>
<polygon points="456,14 472,14 464,24" fill="#9a9b9d"/>
<g fill="#77797c"><rect x="498" y="8" width="16" height="4"/><rect x="498" y="14" width="16" height="4"/><rect x="498" y="20" width="16" height="4"/></g>
<polygon points="554,9 554,26 542,18" fill="#8b8c8f"/>
<rect x="578" y="12" width="392" height="10" rx="5" fill="#808184"/>
<polygon points="2584,8 2584,26 2597,17" fill="#8b8c8f"/>
<circle cx="2628" cy="18" r="4" fill="#808184"/><rect x="2628" y="16" width="24" height="4" fill="#808184"/><rect x="2660" y="16" width="140" height="4" fill="#808184"/><rect x="2650" y="8" width="8" height="20" rx="3" fill="#808184"/><circle cx="2800" cy="18" r="8" fill="#808184"/>
<g fill="#808184"><rect x="2842" y="4" width="14" height="6"/><rect x="2842" y="12" width="14" height="6"/><rect x="2830" y="20" width="8" height="4"/><rect x="2830" y="26" width="8" height="4"/></g>
</svg>

<div class="a" style="left:0;top:1410px;width:2880px;height:6px;background:#25272a"></div>
</body></html>
